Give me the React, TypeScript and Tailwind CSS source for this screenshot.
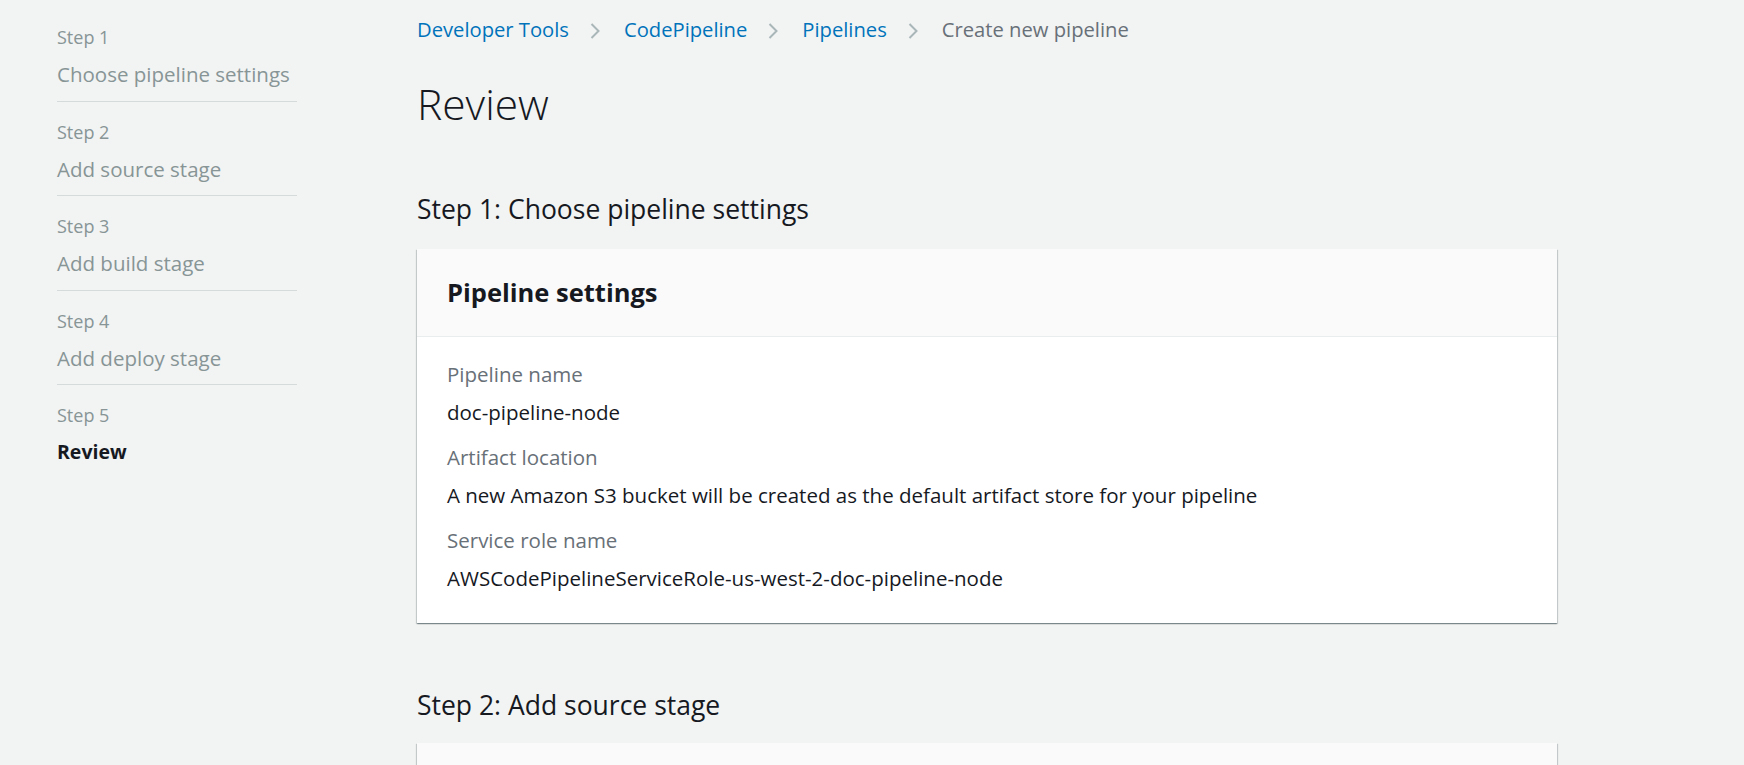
import React from "react";

const steps = [
  { n: 1, title: "Choose pipeline settings" },
  { n: 2, title: "Add source stage" },
  { n: 3, title: "Add build stage" },
  { n: 4, title: "Add deploy stage" },
  { n: 5, title: "Review", active: true },
];

const crumbs = ["Developer Tools", "CodePipeline", "Pipelines"];

const fields = [
  { label: "Pipeline name", value: "doc-pipeline-node" },
  {
    label: "Artifact location",
    value: "A new Amazon S3 bucket will be created as the default artifact store for your pipeline",
  },
  { label: "Service role name", value: "AWSCodePipelineServiceRole-us-west-2-doc-pipeline-node" },
];

function Chevron() {
  return (
    <svg width="10" height="16" viewBox="0 0 10 16" className="ml-[21px] mr-[24px] mt-[3px] shrink-0">
      <polyline points="1.5,1 8.5,8 1.5,15" fill="none" stroke="#aab7b8" strokeWidth="2" />
    </svg>
  );
}

const cardShadow =
  "shadow-[0_1px_1px_0_rgba(0,28,36,0.3),1px_1px_1px_0_rgba(0,28,36,0.15),-1px_1px_1px_0_rgba(0,28,36,0.15)]";

export default function App() {
  return (
    <div
      className="min-h-screen bg-[#f2f3f3] flex overflow-hidden"
      style={{ fontFamily: '"Open Sans", "Noto Sans", sans-serif' }}
    >
      {/* wizard steps */}
      <nav className="w-[240px] ml-[57px] pt-[7px] shrink-0">
        {steps.map((s) => (
          <div
            key={s.n}
            className={s.active ? "pt-[20px]" : "pt-[20px] pb-[12.5px] border-b border-[#d5dbdb]"}
          >
            <div className="text-[18px] leading-[20px] text-[#879596]">Step {s.n}</div>
            <div
              className={
                "mt-[13px] leading-[28px] whitespace-nowrap " +
                (s.active ? "text-[19.5px] font-bold text-[#16191f]" : "text-[20.5px] text-[#879596]")
              }
            >
              {s.title}
            </div>
          </div>
        ))}
      </nav>

      {/* main */}
      <main className="ml-[120px] w-[1140px] pt-[17px] shrink-0">
        <div className="flex items-center h-6 text-[20.2px] whitespace-nowrap">
          {crumbs.map((c) => (
            <React.Fragment key={c}>
              <span className="text-[#0073bb]">{c}</span>
              <Chevron />
            </React.Fragment>
          ))}
          <span className="text-[#687078]">Create new pipeline</span>
        </div>

        <h1 className="mt-[41px] text-[42.5px] leading-[44px] font-light text-[#16191f]">Review</h1>

        <h2 className="mt-[67px] text-[26.5px] leading-[32px] text-[#16191f]">
          Step 1: Choose pipeline settings
        </h2>

        <section className={"mt-[24px] bg-white " + cardShadow}>
          <div className="h-[88px] flex items-center px-[30px] bg-[#fafafa] border-b border-[#eaeded]">
            <h3 className="text-[25.5px] font-bold text-[#16191f]">Pipeline settings</h3>
          </div>
          <div className="px-[30px] pt-[25px] pb-[33px] flex flex-col gap-[21px]">
            {fields.map((f) => (
              <div key={f.label}>
                <div className="text-[20.5px] leading-[24px] text-[#687078]">{f.label}</div>
                <div className="mt-[14px] text-[20.5px] leading-[24px] text-[#16191f]">{f.value}</div>
              </div>
            ))}
          </div>
        </section>

        <h2 className="mt-[66px] text-[26.5px] leading-[32px] text-[#16191f]">Step 2: Add source stage</h2>

        <section className={"mt-[22px] bg-white " + cardShadow}>
          <div className="h-[88px] bg-[#fafafa] border-b border-[#eaeded]" />
        </section>
      </main>
    </div>
  );
}
